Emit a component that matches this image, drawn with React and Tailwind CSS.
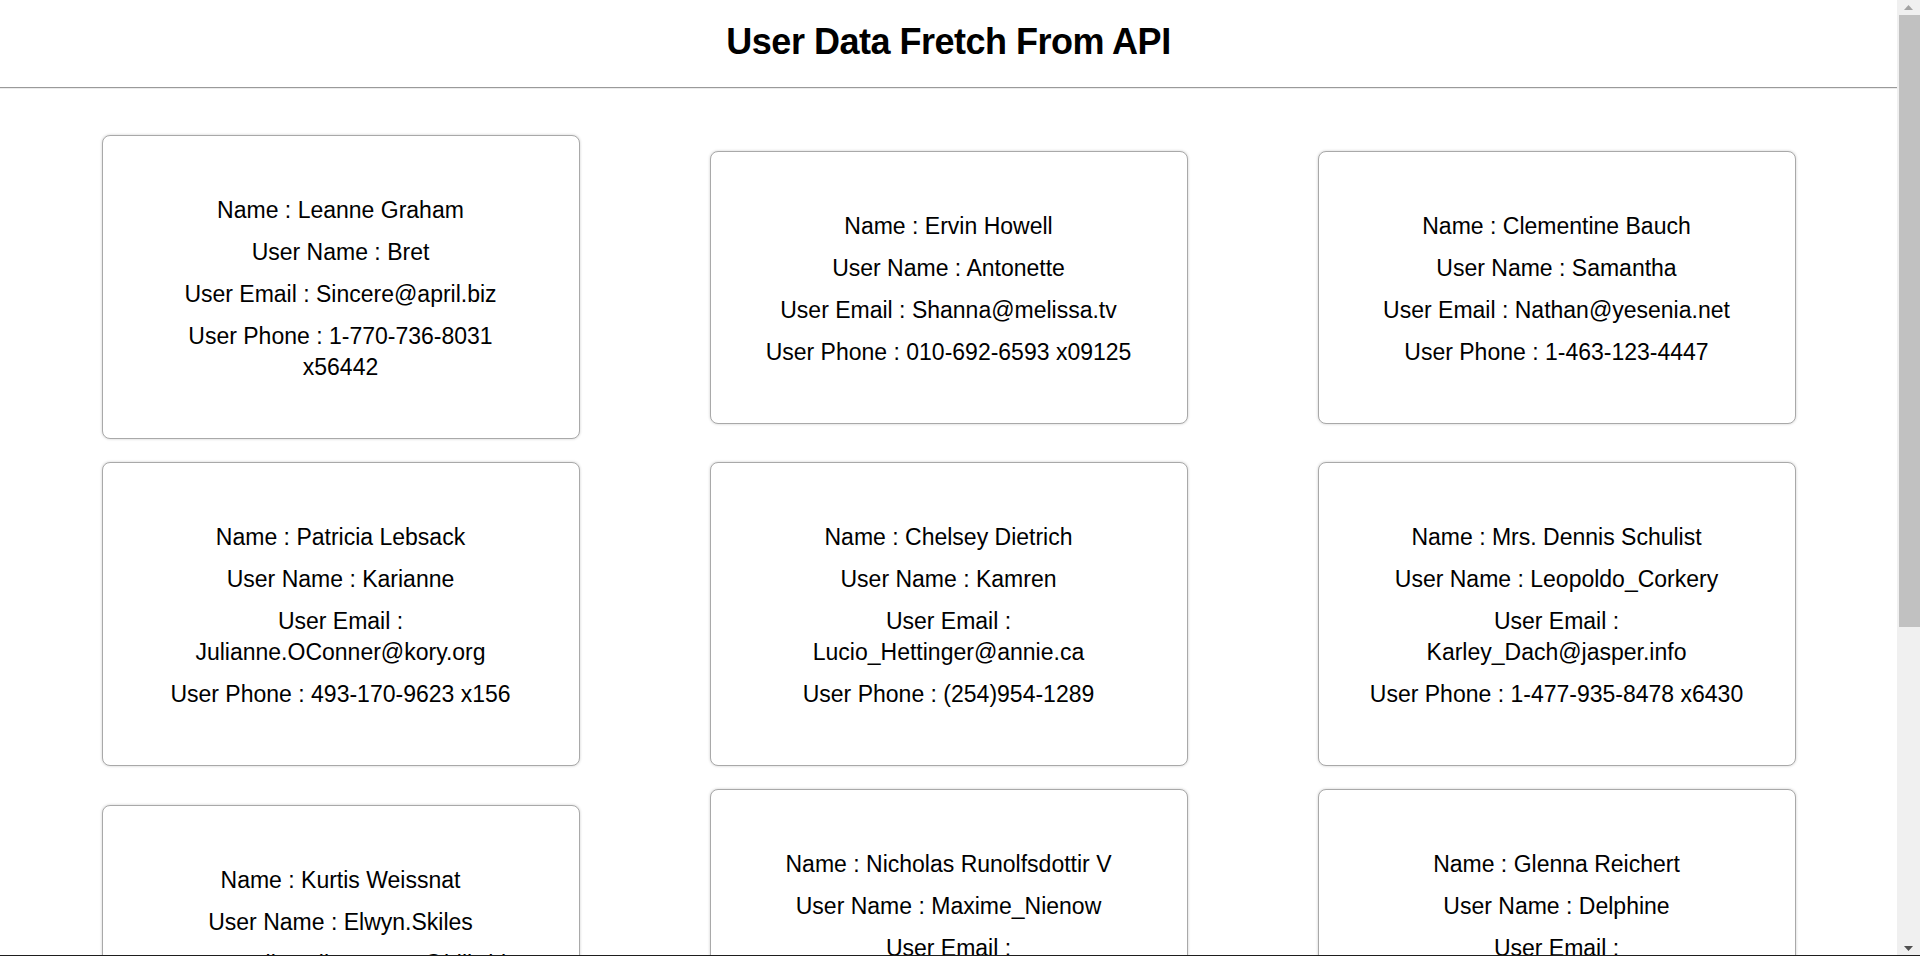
import React from 'react';

const users = [
    { id: 1, name: 'Leanne Graham', username: 'Bret', email: 'Sincere@april.biz', phone: '1-770-736-8031 x56442' },
    { id: 2, name: 'Ervin Howell', username: 'Antonette', email: 'Shanna@melissa.tv', phone: '010-692-6593 x09125' },
    { id: 3, name: 'Clementine Bauch', username: 'Samantha', email: 'Nathan@yesenia.net', phone: '1-463-123-4447' },
    { id: 4, name: 'Patricia Lebsack', username: 'Karianne', email: 'Julianne.OConner@kory.org', phone: '493-170-9623 x156' },
    { id: 5, name: 'Chelsey Dietrich', username: 'Kamren', email: 'Lucio_Hettinger@annie.ca', phone: '(254)954-1289' },
    { id: 6, name: 'Mrs. Dennis Schulist', username: 'Leopoldo_Corkery', email: 'Karley_Dach@jasper.info', phone: '1-477-935-8478 x6430' },
    { id: 7, name: 'Kurtis Weissnat', username: 'Elwyn.Skiles', email: 'Telly.Hoeger@billy.biz', phone: '210.067.6132' },
    { id: 8, name: 'Nicholas Runolfsdottir V', username: 'Maxime_Nienow', email: 'Sherwood@rosamond.me', phone: '586.493.6943 x140' },
    { id: 9, name: 'Glenna Reichert', username: 'Delphine', email: 'Chaim_McDermott@dana.io', phone: '(775)976-6794 x41206' },
    { id: 10, name: 'Clementina DuBuque', username: 'Moriah.Stanton', email: 'Rey.Padberg@karina.biz', phone: '024-648-3804' }
];

function UserCard({ user }) {
    return (
        <div className="flex flex-col gap-[11px] px-12 pt-[59px] pb-[55px] border border-[#a9a9a9] rounded-lg shadow-[0_0_3px_rgba(0,0,0,0.2)] bg-white text-center text-[23px] leading-[31px] text-black">
            <p>Name : {user.name}</p>
            <p>User Name : {user.username}</p>
            <p>User Email : {user.email}</p>
            <p>User Phone : {user.phone}</p>
        </div>
    );
}

// fake window scrollbar, the screenshot has one
function ScrollBar() {
    return (
        <div className="sticky top-0 h-screen w-[23px] shrink-0 flex flex-col items-end bg-[#f0f0f0]">
            <div className="h-[15px] w-full flex items-center justify-center">
                <svg width="9" height="5" viewBox="0 0 9 5"><path d="M0 5 L4.5 0 L9 5 Z" fill="#a3a3a3" /></svg>
            </div>
            <div className="w-[21px] h-[612px] bg-[#c1c1c1]" />
            <div className="flex-1" />
            <div className="h-[15px] w-full flex items-center justify-center">
                <svg width="9" height="5" viewBox="0 0 9 5"><path d="M0 0 L9 0 L4.5 5 Z" fill="#505050" /></svg>
            </div>
        </div>
    );
}

export default function App() {
    return (
        <div className="flex min-h-screen bg-white font-['Liberation_Sans',Arial,sans-serif] text-black">
            <div className="flex-1 min-w-0">
                {/* Header */}
                <div className="pt-[20px] pb-[23px] text-center">
                    <h1 className="text-[36px] leading-[44px] font-bold tracking-[-0.5px]">
                        User Data Fretch From API
                    </h1>
                </div>
                <div className="border-t border-b border-t-[#9a9a9a] border-b-[#ececec]" />

                {/* Cards */}
                <div className="grid grid-cols-[repeat(3,478px)] justify-center gap-x-[130px] gap-y-[23px] items-center pt-[46px] pb-12">
                    {users.map((user) => (
                        <UserCard key={user.id} user={user} />
                    ))}
                </div>
            </div>
            <ScrollBar />
            <div className="fixed bottom-0 inset-x-0 h-px bg-[#1e1e1e]" />
        </div>
    );
}
